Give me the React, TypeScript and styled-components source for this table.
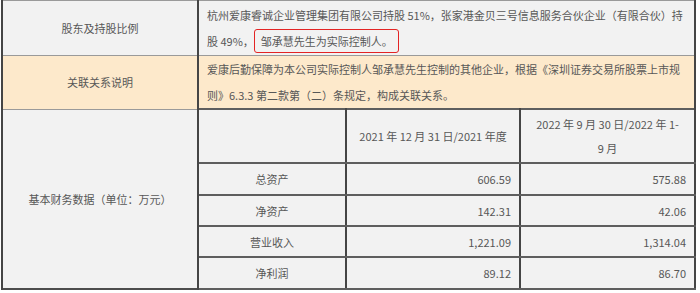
import React from 'react';
import styled, { createGlobalStyle } from 'styled-components';

const GlobalStyle = createGlobalStyle`
  html, body {
    margin: 0;
    padding: 0;
    background: #ffffff;
  }
  body {
    font-family: "Noto Sans CJK SC", "Noto Sans", sans-serif;
  }
`;

type Tone = 'gray' | 'peach';

const Table = styled.table`
  border-collapse: collapse;
  table-layout: fixed;
  width: 693px;
  margin-left: 1px;
  color: #575757;
  font-size: 11px;
  border-top: 1px solid #b5b5b5;
  border-left: 1px solid #9c9c9c;
  border-right: 2px solid #555555;
  border-bottom: 2px solid #4d4d4d;
`;

const Row = styled.tr<{ $height: number }>`
  height: ${(p) => p.$height}px;
`;

const Cell = styled.td<{ $tone?: Tone; $align?: 'left' | 'center' | 'right'; $strong?: boolean }>`
  background: ${(p) => (p.$tone === 'peach' ? '#fde9cb' : '#f2f2f2')};
  text-align: ${(p) => p.$align || 'center'};
  vertical-align: middle;
  padding: 0 8px;
  line-height: 24px;
  border-left: 2px solid #454545;
  border-right: 2px solid #454545;
  border-top: ${(p) => (p.$strong ? '2px solid #5e5e5e' : '1px solid #9a9a9a')};
  border-bottom: ${(p) => (p.$strong ? '2px solid #5e5e5e' : '1px solid #9a9a9a')};
  word-break: break-all;
`;

const TextCell = styled(Cell)`
  line-height: 26px;
  padding: 0 7px 0 8px;
`;

// red annotation box drawn around the controller note
const Marked = styled.span`
  display: inline-block;
  vertical-align: top;
  margin-top: 1px;
  line-height: 20px;
  padding: 1px 5px 1px 6px;
  border: 1.5px solid #e32424;
  border-radius: 3px;
`;

const NumCell = styled(Cell)`
  padding-right: 8px;
`;

const financials = [
  { label: '总资产', a: '606.59', b: '575.88', h: 32 },
  { label: '净资产', a: '142.31', b: '42.06', h: 31 },
  { label: '营业收入', a: '1,221.09', b: '1,314.04', h: 31 },
  { label: '净利润', a: '89.12', b: '86.70', h: 32 },
];

const App: React.FC = () => {
  return (
    <>
      <GlobalStyle />
      <Table>
        <colgroup>
          <col style={{ width: 196 }} />
          <col style={{ width: 148 }} />
          <col style={{ width: 174 }} />
          <col style={{ width: 175 }} />
        </colgroup>
        <tbody>
          <Row $height={55}>
            <Cell>股东及持股比例</Cell>
            <TextCell colSpan={3} $align="left">
              杭州爱康睿诚企业管理集团有限公司持股 51%，张家港金贝三号信息服务合伙企业（有限合伙）持股 49%，
              <Marked>邹承慧先生为实际控制人。</Marked>
            </TextCell>
          </Row>
          <Row $height={53}>
            <Cell $tone="peach">关联关系说明</Cell>
            <TextCell colSpan={3} $align="left" $tone="peach">
              爱康后勤保障为本公司实际控制人邹承慧先生控制的其他企业，根据《深圳证券交易所股票上市规
              <br />
              则》6.3.3 第二款第（二）条规定，构成关联关系。
            </TextCell>
          </Row>
          <Row $height={54}>
            <Cell rowSpan={5}>基本财务数据（单位：万元）</Cell>
            <Cell $strong />
            <Cell $strong>2021 年 12 月 31 日/2021 年度</Cell>
            <Cell $strong>
              2022 年 9 月 30 日/2022 年 1-
              <br />9 月
            </Cell>
          </Row>
          {financials.map((f) => (
            <Row key={f.label} $height={f.h}>
              <Cell $strong>{f.label}</Cell>
              <NumCell $strong $align="right">{f.a}</NumCell>
              <NumCell $strong $align="right">{f.b}</NumCell>
            </Row>
          ))}
        </tbody>
      </Table>
    </>
  );
};

export default App;
